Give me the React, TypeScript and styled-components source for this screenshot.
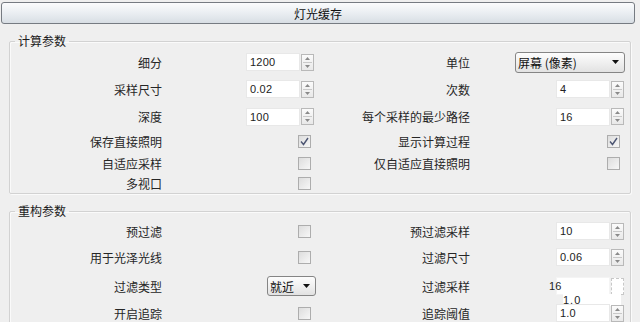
import React from 'react';
import styled, { createGlobalStyle } from 'styled-components';

const GlobalStyle = createGlobalStyle`
  html, body {
    margin: 0;
    padding: 0;
    background: #efefef;
  }
  body {
    font-family: "Noto Sans CJK SC", "Liberation Sans", sans-serif;
    font-size: 12px;
    color: #1e1e1e;
    overflow: hidden;
  }
`;

const Panel = styled.div`
  width: 640px;
  height: 322px;
  overflow: hidden;
  box-sizing: border-box;
  padding: 2px 0 0 1px;
`;

const TitleBar = styled.div`
  width: 634px;
  height: 22px;
  box-sizing: border-box;
  border: 1px solid #767b82;
  border-radius: 3px;
  background: linear-gradient(#fbfcfd, #eaeef2 50%, #d8dee4);
  display: flex;
  align-items: center;
  justify-content: center;
  color: #111;
`;

const Group = styled.fieldset`
  margin: 9px 0 0 8px;
  width: 622px;
  box-sizing: border-box;
  border: 1px solid #d2d2d2;
  border-radius: 2px;
  box-shadow: inset 1px 1px 0 #fafafa, 1px 1px 0 #fafafa;
  padding: 0 5px 0 0;
  min-width: 0;

  legend {
    margin-left: 5px;
    padding: 0 3px;
    line-height: 16px;
    color: #1a1a1a;
  }
`;

const Row = styled.div<{ $h: number }>`
  display: grid;
  grid-template-columns: 152px 154px 154px 155px;
  height: ${p => p.$h}px;
  align-items: center;
`;

const Label = styled.span`
  text-align: right;
  white-space: nowrap;
  color: #262626;
`;

const Cell = styled.div<{ $pr?: number }>`
  display: flex;
  justify-content: flex-end;
  align-items: center;
  padding-right: ${p => p.$pr ?? 0}px;
  position: relative;
`;

const Field = styled.div<{ $w: number; $ghost?: boolean }>`
  width: ${p => p.$w}px;
  height: 18px;
  box-sizing: border-box;
  background: #fff;
  border: 1px solid ${p => (p.$ghost ? '#f4f4f4' : '#e8e8e8')};
  display: flex;
  align-items: center;
  padding-left: ${p => (p.$ghost ? 0 : 3)}px;
  text-indent: ${p => (p.$ghost ? -8 : 0)}px;
  font-family: "Liberation Sans", Arial, sans-serif;
  font-size: 11px;
  letter-spacing: 0.2px;
  color: #222;
`;

const SpinBox = styled.div<{ $ghost?: boolean }>`
  width: 13px;
  height: 17px;
  box-sizing: border-box;
  margin-left: 1px;
  border: 1px ${p => (p.$ghost ? 'dashed #c8c8c8' : 'solid #b9b9b9')};
  background: ${p => (p.$ghost ? '#fff' : 'linear-gradient(#fbfbfb, #e9e9e9)')};
  display: flex;
  flex-direction: column;
  align-items: center;
  justify-content: space-evenly;

  svg {
    display: block;
  }
`;

const Divider = styled.div`
  width: 9px;
  height: 1px;
  background: #c9c9c9;
`;

const CheckBox = styled.div`
  width: 13px;
  height: 13px;
  box-sizing: border-box;
  border: 1px solid #adadad;
  background: linear-gradient(135deg, #dddddd, #f7f7f7);
  display: flex;
  align-items: center;
  justify-content: center;
`;

const Select = styled.div<{ $w: number; $h: number }>`
  width: ${p => p.$w}px;
  height: ${p => p.$h}px;
  box-sizing: border-box;
  border: 1px solid #858585;
  border-radius: 3px;
  background: linear-gradient(#fdfdfd, #f0f0f0 50%, #e2e2e2);
  display: flex;
  align-items: center;
  justify-content: space-between;
  padding: 0 5px 0 2px;
  color: #111;
  white-space: nowrap;
`;

const Ghost = styled.span<{ $top: number; $left: number }>`
  position: absolute;
  top: ${p => p.$top}px;
  left: ${p => p.$left}px;
  font-family: "Liberation Sans", Arial, sans-serif;
  font-size: 11px;
  letter-spacing: 1px;
  color: #222;
  background: #fff;
  padding-right: 40px;
`;

const Spinner = ({ value, ghost }: { value: string; ghost?: boolean }) => (
  <>
    <Field $w={54} $ghost={ghost}>
      {value}
    </Field>
    <SpinBox $ghost={ghost}>
      {!ghost && (
        <>
          <svg width="5" height="3" viewBox="0 0 5 3">
            <path d="M0 3 L2.5 0 L5 3 Z" fill="#8a8a8a" />
          </svg>
          <Divider />
          <svg width="5" height="3" viewBox="0 0 5 3">
            <path d="M0 0 L2.5 3 L5 0 Z" fill="#8a8a8a" />
          </svg>
        </>
      )}
    </SpinBox>
  </>
);

const Check = ({ checked }: { checked?: boolean }) => (
  <CheckBox>
    {checked && (
      <svg width="9" height="9" viewBox="0 0 9 9">
        <path d="M1 4.5 L3.5 7.5 L8 1" fill="none" stroke="#4d5673" strokeWidth="1.4" />
      </svg>
    )}
  </CheckBox>
);

const Arrow = () => (
  <svg width="7" height="4" viewBox="0 0 7 4">
    <path d="M0 0 L7 0 L3.5 4 Z" fill="#111" />
  </svg>
);

const App = () => (
  <Panel>
    <GlobalStyle />
    <TitleBar>灯光缓存</TitleBar>

    <Group>
      <legend>计算参数</legend>
      <Row $h={26}>
        <Label>细分</Label>
        <Cell $pr={2}>
          <Spinner value="1200" />
        </Cell>
        <Label>单位</Label>
        <Cell>
          <Select $w={110} $h={21}>
            屏幕 (像素)
            <Arrow />
          </Select>
        </Cell>
      </Row>
      <Row $h={28}>
        <Label>采样尺寸</Label>
        <Cell $pr={2}>
          <Spinner value="0.02" />
        </Cell>
        <Label>次数</Label>
        <Cell $pr={1}>
          <Spinner value="4" />
        </Cell>
      </Row>
      <Row $h={27}>
        <Label>深度</Label>
        <Cell $pr={2}>
          <Spinner value="100" />
        </Cell>
        <Label>每个采样的最少路径</Label>
        <Cell $pr={1}>
          <Spinner value="16" />
        </Cell>
      </Row>
      <Row $h={23}>
        <Label>保存直接照明</Label>
        <Cell $pr={5}>
          <Check checked />
        </Cell>
        <Label>显示计算过程</Label>
        <Cell $pr={5}>
          <Check checked />
        </Cell>
      </Row>
      <Row $h={20}>
        <Label>自适应采样</Label>
        <Cell $pr={5}>
          <Check />
        </Cell>
        <Label>仅自适应直接照明</Label>
        <Cell $pr={5}>
          <Check />
        </Cell>
      </Row>
      <Row $h={20}>
        <Label>多视口</Label>
        <Cell $pr={5}>
          <Check />
        </Cell>
        <span />
        <span />
      </Row>
    </Group>

    <Group>
      <legend>重构参数</legend>
      <Row $h={24}>
        <Label>预过滤</Label>
        <Cell $pr={5}>
          <Check />
        </Cell>
        <Label>预过滤采样</Label>
        <Cell $pr={1}>
          <Spinner value="10" />
        </Cell>
      </Row>
      <Row $h={28}>
        <Label>用于光泽光线</Label>
        <Cell $pr={5}>
          <Check />
        </Cell>
        <Label>过滤尺寸</Label>
        <Cell $pr={1}>
          <Spinner value="0.06" />
        </Cell>
      </Row>
      <Row $h={30}>
        <Label>过滤类型</Label>
        <Cell>
          <Select $w={49} $h={20}>
            就近
            <Arrow />
          </Select>
        </Cell>
        <Label>过滤采样</Label>
        <Cell $pr={1}>
          <Spinner value="16" ghost />
          <Ghost $top={17} $left={93}>1.0</Ghost>
        </Cell>
      </Row>
      <Row $h={24}>
        <Label>开启追踪</Label>
        <Cell $pr={5}>
          <Check />
        </Cell>
        <Label>追踪阈值</Label>
        <Cell $pr={1}>
          <Spinner value="1.0" />
        </Cell>
      </Row>
    </Group>
  </Panel>
);

export default App;
